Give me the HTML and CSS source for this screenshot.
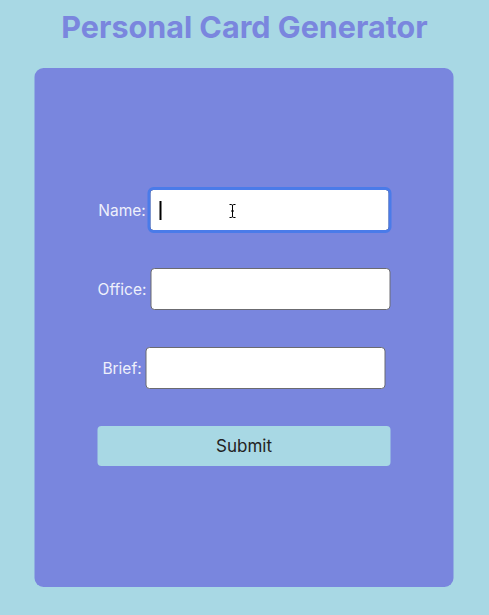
FILE: index.html
```html
<!DOCTYPE html>
<html lang="en">
<head>
<meta charset="utf-8">
<title>Personal Card Generator</title>
<link rel="stylesheet" href="styles.css">
</head>
<body>
<h1 class="title">Personal Card Generator</h1>
<main class="card">
  <form class="form">
    <div class="row">
      <label class="label" for="name">Name:</label>
      <span class="field focused">
        <input class="input" id="name" type="text">
        <span class="caret"></span>
        <svg class="ibeam" width="10" height="16" viewBox="0 0 10 16" aria-hidden="true">
          <path d="M2 1.5 H4 Q5 1.5 5 3 V13 Q5 14.5 4 14.5 H2 M8 1.5 H6 Q5 1.5 5 3 M5 13 Q5 14.5 6 14.5 H8 M3.5 8 H6.5" fill="none" stroke="#fff" stroke-width="2.4"/>
          <path d="M2 1.5 H4 Q5 1.5 5 3 V13 Q5 14.5 4 14.5 H2 M8 1.5 H6 Q5 1.5 5 3 M5 13 Q5 14.5 6 14.5 H8 M3.5 8 H6.5" fill="none" stroke="#000" stroke-width="1"/>
        </svg>
      </span>
    </div>
    <div class="row">
      <label class="label" for="office">Office:</label>
      <span class="field"><input class="input" id="office" type="text"></span>
    </div>
    <div class="row">
      <label class="label" for="brief">Brief:</label>
      <span class="field"><input class="input" id="brief" type="text"></span>
    </div>
    <button class="submit" type="button">Submit</button>
  </form>
</main>
</body>
</html>
```
FILE: styles.css
```css
html, body {
  margin: 0;
  padding: 0;
}
body {
  background: #a8d8e4;
  font-family: Inter, "Noto Sans", sans-serif;
  height: 615px;
  overflow: hidden;
}
.title {
  margin: 8px 0 23px;
  font-size: 30.5px;
  line-height: 37px;
  font-weight: 700;
  color: #7a86de;
  text-align: center;
}
.card {
  width: 419px;
  height: 519px;
  margin: 0 auto;
  background: #7986de;
  border-radius: 9px;
  display: flex;
  align-items: center;
  justify-content: center;
  transform: translateX(-0.5px);
}
.form {
  display: flex;
  flex-direction: column;
  align-items: center;
  gap: 37px;
}
.row {
  display: flex;
  align-items: center;
  gap: 4px;
}
.label {
  font-size: 15.5px;
  color: #eef0fb;
}
.field {
  position: relative;
  display: block;
}
.input {
  display: block;
  box-sizing: border-box;
  width: 240px;
  height: 42px;
  margin: 0;
  padding: 0 10px;
  border: 1px solid #6b6b70;
  border-radius: 4px;
  background: #fff;
  font: 16px Inter, sans-serif;
}
.focused .input {
  outline: 3px solid #4a7be9;
  outline-offset: -1px;
}
.caret {
  position: absolute;
  left: 10px;
  top: 12px;
  width: 1.5px;
  height: 19px;
  background: #000;
}
.ibeam {
  position: absolute;
  left: 78px;
  top: 14px;
}
.submit {
  width: 293px;
  height: 40px;
  margin: 0;
  border: none;
  border-radius: 4px;
  background: #a8d8e4;
  color: #222;
  font: 17px Inter, sans-serif;
  cursor: pointer;
}
```
